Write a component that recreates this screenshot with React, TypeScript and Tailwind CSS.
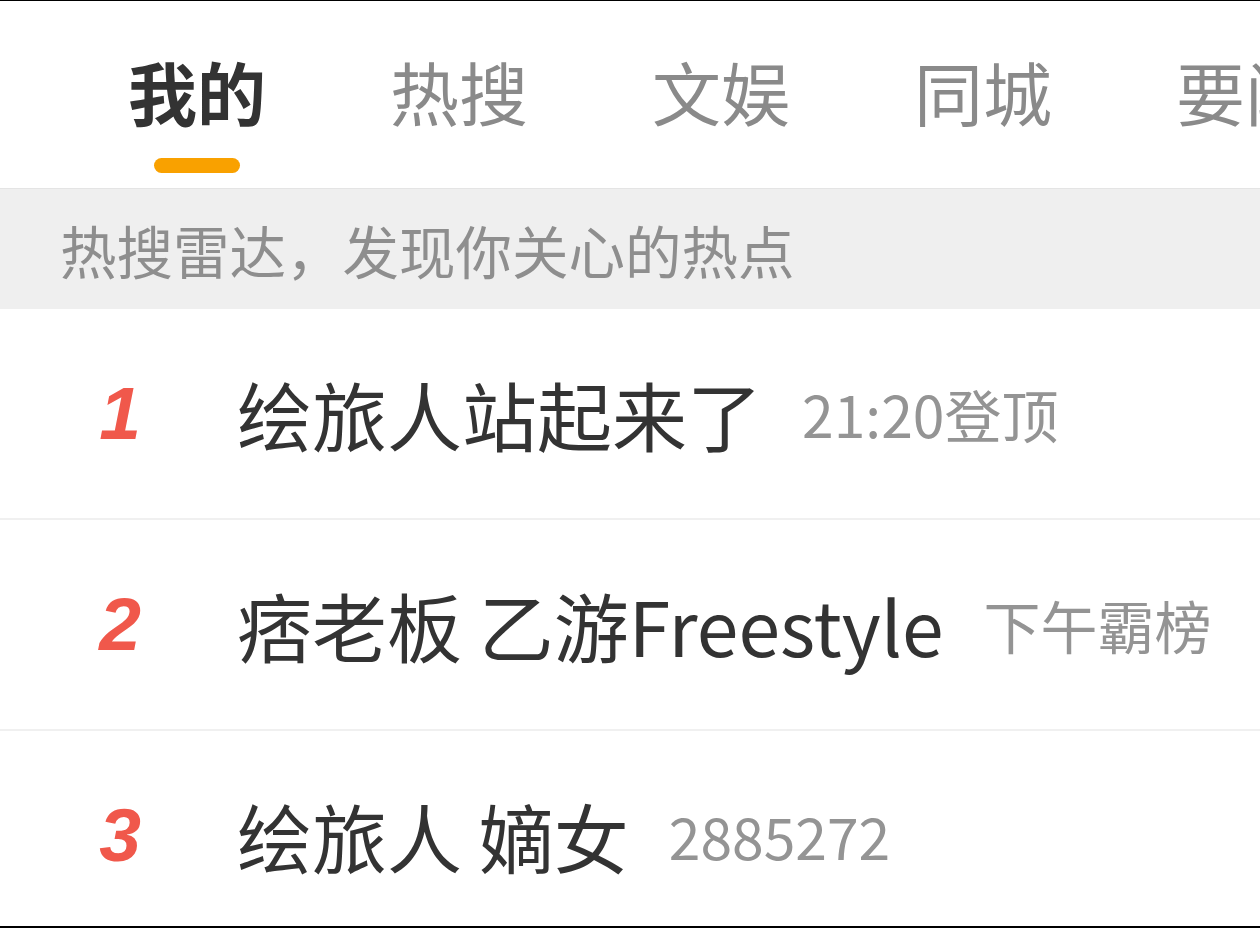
import React from "react";

const cjk = { fontFamily: '"Noto Sans CJK SC", "Noto Sans", sans-serif' };
const rankFont = { fontFamily: '"Liberation Sans", Arial, sans-serif' };

const tabs = ["我的", "热搜", "文娱", "同城", "要闻"];

const rows = [
  { rank: "1", title: "绘旅人站起来了", sub: "21:20登顶" },
  { rank: "2", title: "痞老板 乙游Freestyle", sub: "下午霸榜" },
  { rank: "3", title: "绘旅人 嫡女", sub: "2885272" },
];

export default function App() {
  return (
    <div
      className="w-[1260px] h-[928px] overflow-hidden bg-white border-t-[1px] border-b-[2px] border-black flex flex-col"
      style={cjk}
    >
      {/* Tabs */}
      <div className="flex flex-col shrink-0 h-[187px] pt-[56px] overflow-hidden">
        <div className="flex pl-[128px] gap-[124px] whitespace-nowrap">
          {tabs.map((t, i) => (
            <div key={t} className="flex flex-col items-center shrink-0">
              <span
                className={
                  "text-[69px] leading-none " +
                  (i === 0 ? "font-bold text-[#333333]" : "text-[#8a8a8a]")
                }
              >
                {t}
              </span>
              {i === 0 ? (
                <div className="mt-[32px] w-[86px] h-[15px] rounded-full bg-[#f9a100]" />
              ) : null}
            </div>
          ))}
        </div>
      </div>

      {/* Banner */}
      <div className="shrink-0 h-[121px] bg-[#efefef] border-t border-[#e4e4e4] flex items-center pl-[60px]">
        <span className="text-[56.5px] leading-none text-[#8e8e8e]">热搜雷达，发现你关心的热点</span>
      </div>

      {/* Rows */}
      {rows.map((r) => (
        <div
          key={r.rank}
          className="shrink-0 h-[211px] border-b-2 border-[#f0f0f0] flex items-center whitespace-nowrap"
        >
          <div className="w-[48px] ml-[96px] text-center">
            <span
              className="text-[75px] leading-none font-bold italic text-[#f0584b]"
              style={rankFont}
            >
              {r.rank}
            </span>
          </div>
          <span className="ml-[93px] text-[75px] leading-none text-[#333333]">{r.title}</span>
          <span className="ml-[40px] text-[57px] leading-none text-[#949494]">{r.sub}</span>
        </div>
      ))}
    </div>
  );
}
